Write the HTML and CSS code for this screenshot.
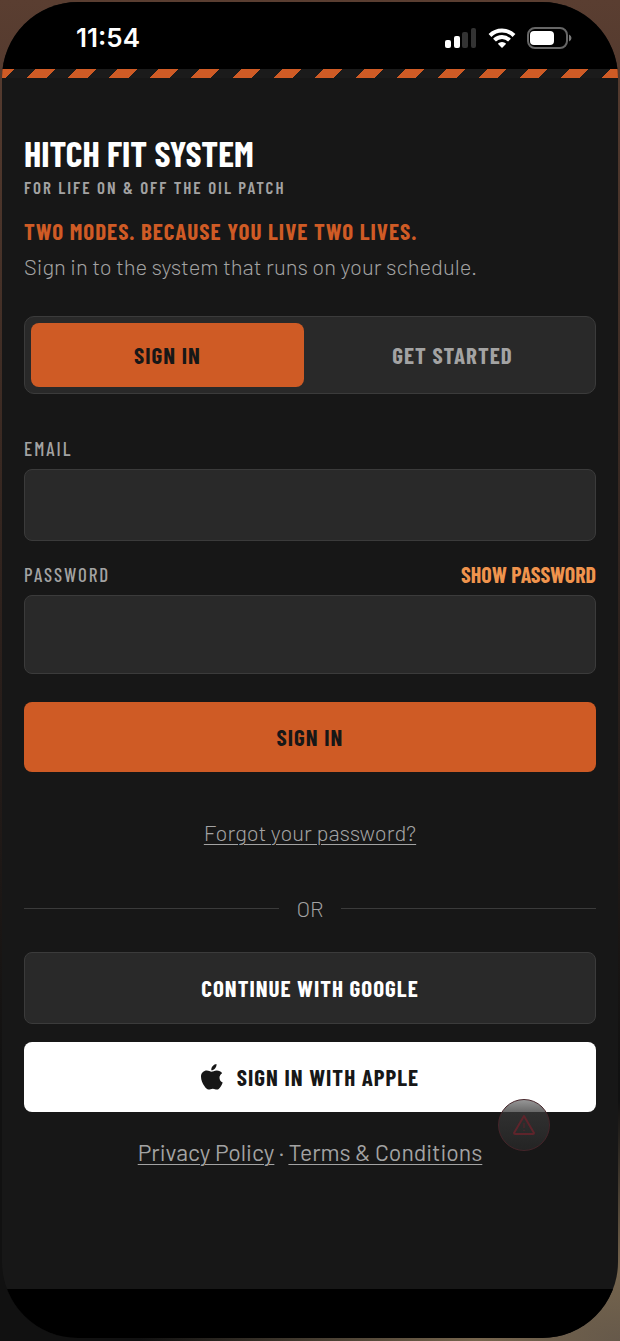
FILE: index.html
```
<!DOCTYPE html>
<html lang="en">
<head>
  <meta charset="UTF-8">
  <meta name="viewport" content="width=device-width, initial-scale=1.0">
  <title>Hitch Fit System</title>
  <link rel="stylesheet" href="styles.css">
</head>
<body>
  <div class="device">

    <!-- Status bar -->
    <div class="status-bar">
      <span class="time">11:54</span>
      <div class="status-icons">
        <svg width="32" height="20" viewBox="0 0 32 20" fill="#fff">
          <rect x="0" y="12" width="6" height="8" rx="2"/>
          <rect x="9" y="8" width="6" height="12" rx="2"/>
          <rect x="17" y="4" width="6" height="16" rx="2" fill="#333"/>
          <rect x="26" y="0" width="5" height="20" rx="2" fill="#333"/>
        </svg>
        <svg width="28" height="20" viewBox="0 0 28 20" fill="none" stroke="#fff" stroke-width="4">
          <path d="M2 7.500A17 17 0 0 1 26 7.500"/>
          <path d="M6.500 12.200A10.600 10.600 0 0 1 21.500 12.200"/>
          <path d="M14 20L9.800 15.700A6 6 0 0 1 18.200 15.700Z" fill="#fff" stroke="none"/>
        </svg>
        <svg width="45" height="22" viewBox="0 0 45 22">
          <rect x="1" y="1" width="39" height="20" rx="7" fill="none" stroke="#666" stroke-width="2"/>
          <rect x="3" y="4" width="24" height="14" rx="4" fill="#fff"/>
          <path d="M42 7.500q2.500 1 2.500 3.500t-2.500 3.500z" fill="#777"/>
        </svg>
      </div>
    </div>

    <div class="hazard"></div>

    <main class="screen">
      <header>
        <h1>Hitch Fit System</h1>
        <p class="tagline">For life on &amp; off the oil patch</p>
        <h2>Two modes. Because you live two lives.</h2>
        <p class="intro">Sign in to the system that runs on your schedule.</p>
      </header>

      <div class="tabs">
        <button type="button" class="tab active">Sign in</button>
        <button type="button" class="tab">Get started</button>
      </div>

      <form>
        <div class="field-head">
          <label for="email">Email</label>
        </div>
        <input type="email" id="email">

        <div class="field-head">
          <label for="password">Password</label>
          <button type="button" class="show-password">Show password</button>
        </div>
        <input type="password" id="password" class="tall">

        <button type="submit" class="btn primary">Sign in</button>
      </form>

      <a href="#" class="link forgot">Forgot your password?</a>

      <div class="divider">OR</div>

      <button type="button" class="btn google">Continue with Google</button>
      <button type="button" class="btn apple">
        <svg width="22" height="26" viewBox="0 0 22 26" fill="#171717">
          <path d="M15.500 0c.2 1.700-.5 3.300-1.500 4.400-1 1.200-2.400 1.900-3.700 1.800-.2-1.600.6-3.200 1.500-4.200C12.800.9 14.300.1 15.500 0z"/>
          <path d="M21.200 9.200c-1.700 1-2.700 2.500-2.700 4.500 0 2.300 1.300 4 3.200 4.800-.5 1.500-1.200 2.900-2.100 4.200-1 1.500-2.100 2.900-3.700 2.900s-2.100-.9-4.100-.9-2.600.9-4.200.9-2.800-1.400-3.900-3C1.500 19.700 0 16 0 12.700 0 8.800 2.700 6.500 5.800 6.500c1.900 0 3.500 1.200 4.700 1.200 1.200 0 3-1.300 5.200-1.300 2.300 0 4.300 1 5.500 2.800z"/>
        </svg>
        Sign in with Apple
      </button>

      <div class="legal">
        <a href="#" class="link">Privacy Policy</a> · <a href="#" class="link">Terms &amp; Conditions</a>
        <button type="button" class="alert" aria-label="Alert">
          <svg width="22" height="20" viewBox="0 0 22 20" fill="none" stroke="#5e242b" stroke-width="2" stroke-linejoin="round">
            <path d="M11 1L21 18Q21 19 20 19H2Q1 19 1 18Z"/>
            <path d="M11 8v5M11 15v1" stroke="#44262a"/>
          </svg>
        </button>
      </div>
    </main>

    <div class="home-bar"></div>
  </div>
</body>
</html>
```
FILE: styles.css
```
* { box-sizing: border-box; }
body {
  margin: 0;
  min-height: 100vh;
  padding: 2px 2px 3px;
  display: flex;
  background:
    radial-gradient(ellipse 480px 240px at 100% 100%, #66594a, #76654d 30%, transparent),
    linear-gradient(#5a3e31, #2a1f1b 50%, #111 80%);
  font-family: Barlow, Roboto, sans-serif;
  font-weight: 300;
  color: #a3a3a3;
}
.device {
  flex: 1;
  display: flex;
  flex-direction: column;
  background: #171717;
  border-radius: 76px;
  overflow: hidden;
}

/* Status bar */
.status-bar {
  height: 67px;
  padding: 4px 46px 0 74px;
  display: flex;
  align-items: center;
  justify-content: space-between;
  background: #000;
}
.time {
  font: 600 26px Inter, sans-serif;
  color: #fff;
}
.status-icons {
  display: flex;
  align-items: center;
  gap: 11px;
}
.hazard {
  height: 9px;
  background: repeating-linear-gradient(135deg, #cf5b25 0 9px, #1b1b1b 9px 24px, #cf5b25 24px 29px);
}

.screen {
  flex: 1;
  padding: 55px 22px 0;
  display: flex;
  flex-direction: column;
}
h1, h2, .tagline, label, button {
  font-family: "Barlow Condensed", "Roboto Condensed", "Liberation Sans Narrow", sans-serif;
  font-weight: 700;
  text-transform: uppercase;
}
h1, h2, p { margin: 0; }
h1 {
  font-size: 36px;
  line-height: 40px;
  color: #fff;
}
.tagline {
  margin-top: 4px;
  font-size: 17px;
  font-weight: 600;
  line-height: 20px;
  letter-spacing: 2px;
}
h2 {
  margin-top: 20px;
  font-size: 23px;
  line-height: 28px;
  letter-spacing: 1px;
  color: #cf5b25;
}
.intro {
  margin-top: 6px;
  font-size: 22px;
  line-height: 30px;
}

/* Tabs */
.tabs {
  margin-top: 35px;
  padding: 6px;
  display: flex;
  gap: 12px;
  background: #292929;
  border: 1px solid #3b3b3b;
  border-radius: 10px;
}
.tab {
  flex: 1;
  height: 64px;
  border: 0;
  border-radius: 8px;
  background: none;
  font-size: 23px;
  letter-spacing: 1px;
  color: #a3a3a3;
}
.tab.active {
  background: #cf5b25;
  color: #171717;
}

/* Form */
form {
  margin-top: 39px;
  display: flex;
  flex-direction: column;
}
.field-head {
  height: 30px;
  margin-bottom: 6px;
  display: flex;
  align-items: center;
  justify-content: space-between;
}
label {
  font-size: 19px;
  font-weight: 500;
  letter-spacing: 2px;
}
.show-password {
  padding: 0;
  border: 0;
  background: none;
  font-size: 22px;
  color: #f0944d;
}
input {
  width: 100%;
  height: 72px;
  margin-bottom: 18px;
  padding: 0 20px;
  background: #292929;
  border: 1px solid #3b3b3b;
  border-radius: 8px;
  font-size: 22px;
  color: #fff;
}
input.tall {
  height: 79px;
  margin-bottom: 28px;
}
.btn {
  height: 70px;
  display: flex;
  align-items: center;
  justify-content: center;
  gap: 14px;
  border: 0;
  border-radius: 8px;
  font-size: 23px;
  letter-spacing: 1px;
}
.primary {
  background: #cf5b25;
  color: #171717;
}
.link {
  color: #a3a3a3;
  text-decoration-thickness: 1px;
  text-underline-offset: 3px;
}
.forgot {
  margin-top: 45px;
  align-self: center;
  font-size: 22px;
  line-height: 30px;
}
.divider {
  margin: 46px 0 29px;
  display: flex;
  align-items: center;
  gap: 17px;
  font-size: 22px;
  line-height: 30px;
}
.divider::before, .divider::after {
  content: "";
  flex: 1;
  height: 1px;
  background: #3b3b3b;
}
.google {
  height: 72px;
  background: #292929;
  border: 1px solid #3b3b3b;
  color: #fff;
}
.apple {
  margin-top: 18px;
  background: #fff;
  color: #171717;
}
.legal {
  position: relative;
  margin-top: 25px;
  text-align: center;
  font-size: 23px;
  font-weight: 400;
  line-height: 30px;
}
.alert {
  position: absolute;
  right: 46px;
  top: -38px;
  width: 52px;
  height: 52px;
  padding: 0;
  display: flex;
  align-items: center;
  justify-content: center;
  border: 1px solid #45252a;
  border-radius: 50%;
  background: linear-gradient(#969696, #686868 24%, #303030 25%, #242424);
}
.home-bar {
  height: 49px;
  background: #000;
}
```
